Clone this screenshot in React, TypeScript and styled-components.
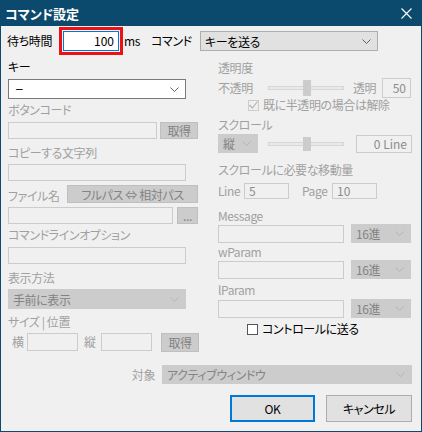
import * as React from 'react';
import styled, { createGlobalStyle } from 'styled-components';

const GlobalStyle = createGlobalStyle`
	html, body {
		margin: 0;
		padding: 0;
		background: #f0f0f0;
	}
	* {
		box-sizing: border-box;
	}
`;

const colors = {
	frame: '#0b4a6d',
	face: '#f0f0f0',
	text: '#000000',
	grayText: '#a0a0a0',
	disabledFill: '#cccccc',
	disabledBorder: '#bfbfbf',
	disabledInk: '#838383',
	buttonFace: '#e1e1e1',
	buttonBorder: '#adadad',
	accent: '#0078d7',
	highlight: '#ee1111'
};

const FONT = `"Noto Sans CJK JP", "Noto Sans", "Liberation Sans", sans-serif`;

const Window = styled.div`
	width: 422px;
	height: 432px;
	border: 1px solid ${colors.frame};
	border-top: none;
	background: ${colors.face};
	display: flex;
	flex-direction: column;
	font-family: ${FONT};
	font-size: 12px;
	letter-spacing: -0.4px;
	font-feature-settings: 'palt';
	color: ${colors.text};
`;

const TitleBar = styled.div`
	height: 26px;
	margin: 0 -1px;
	background: ${colors.frame};
	color: #ffffff;
	display: flex;
	align-items: center;
	justify-content: space-between;
	padding: 0 10px 0 5px;
	font-weight: bold;
	font-size: 13px;
	letter-spacing: 0;
	flex-shrink: 0;
`;

const Body = styled.div`
	display: flex;
	flex-direction: column;
	padding: 0 9px 0 7px;
`;

const TopRow = styled.div`
	margin-top: 1px;
	height: 28px;
	display: flex;
	align-items: center;
`;

const Text = styled.span<{ $w?: number; $dim?: boolean; $ml?: number }>`
	display: inline-block;
	flex-shrink: 0;
	width: ${p => (p.$w ? `${p.$w}px` : 'auto')};
	margin-left: ${p => p.$ml || 0}px;
	line-height: 14px;
	white-space: nowrap;
	color: ${p => (p.$dim ? colors.grayText : colors.text)};
`;

const Dash = styled.span`
	font-family: 'Liberation Sans', sans-serif;
	padding-left: 3px;
`;

const Label = styled.div<{ $mt: number; $dim?: boolean }>`
	margin-top: ${p => p.$mt}px;
	height: 14px;
	line-height: 14px;
	white-space: nowrap;
	color: ${p => (p.$dim ? colors.grayText : colors.text)};
`;

const Highlight = styled.div`
	width: 64px;
	height: 28px;
	border: 3px solid ${colors.highlight};
	padding: 1px;
	flex-shrink: 0;
`;

const FocusEdit = styled.div`
	height: 20px;
	border: 1px solid ${colors.accent};
	background: #ffffff;
	text-align: right;
	padding-right: 4px;
	line-height: 18px;
	letter-spacing: 0;
`;

const Edit = styled.div<{ $w: number; $h?: number; $ml?: number; $right?: boolean }>`
	width: ${p => p.$w}px;
	height: ${p => p.$h || 17}px;
	margin-left: ${p => p.$ml || 0}px;
	flex-shrink: 0;
	border: 1px solid ${colors.disabledFill};
	background: ${colors.face};
	color: #8c8c8c;
	line-height: ${p => (p.$h || 17) - 2}px;
	padding: 0 4px;
	text-align: ${p => (p.$right ? 'right' : 'left')};
	white-space: nowrap;
	letter-spacing: 0;
`;

const Combo = styled.div<{ $w: number; $h?: number; $ml?: number; $kind: 'edit' | 'button' | 'off' }>`
	width: ${p => p.$w}px;
	height: ${p => p.$h || 20}px;
	margin-left: ${p => p.$ml || 0}px;
	flex-shrink: 0;
	display: flex;
	align-items: center;
	justify-content: space-between;
	padding: 0 6px 0 4px;
	white-space: nowrap;
	border: 1px solid
		${p => (p.$kind === 'edit' ? '#7a7a7a' : p.$kind === 'button' ? colors.buttonBorder : colors.disabledFill)};
	background: ${p => (p.$kind === 'edit' ? '#ffffff' : p.$kind === 'button' ? colors.buttonFace : colors.disabledFill)};
	color: ${p => (p.$kind === 'off' ? colors.disabledInk : colors.text)};
`;

const PushButton = styled.div<{ $w: number; $h?: number; $ml?: number; $off?: boolean; $default?: boolean }>`
	width: ${p => p.$w}px;
	height: ${p => p.$h || 17}px;
	margin-left: ${p => p.$ml || 0}px;
	flex-shrink: 0;
	display: flex;
	align-items: center;
	justify-content: center;
	white-space: nowrap;
	background: ${p => (p.$off ? colors.disabledFill : colors.buttonFace)};
	border: ${p => (p.$default ? `2px solid ${colors.accent}` : `1px solid ${p.$off ? colors.disabledBorder : colors.buttonBorder}`)};
	color: ${p => (p.$off ? colors.disabledInk : colors.text)};
`;

const Columns = styled.div`
	display: grid;
	grid-template-columns: 191px 194px;
	column-gap: 19px;
	align-items: start;
`;

const Column = styled.div`
	display: flex;
	flex-direction: column;
`;

const Row = styled.div<{ $mt: number; $h: number; $pl?: number; $align?: string; $justify?: string }>`
	margin-top: ${p => p.$mt}px;
	height: ${p => p.$h}px;
	padding-left: ${p => p.$pl || 0}px;
	display: flex;
	align-items: ${p => p.$align || 'center'};
	justify-content: ${p => p.$justify || 'flex-start'};
`;

const Track = styled.div<{ $ml?: number }>`
	position: relative;
	width: 76px;
	height: 4px;
	margin-left: ${p => p.$ml || 0}px;
	flex-shrink: 0;
	background: #e7eaea;
	border: 1px solid #d6d6d6;
`;

const Thumb = styled.div<{ $h: number }>`
	position: absolute;
	left: 34px;
	top: 50%;
	width: 8px;
	height: ${p => p.$h}px;
	margin-top: ${p => -p.$h / 2}px;
	background: ${colors.disabledFill};
`;

const CheckBox = styled.div<{ $off?: boolean }>`
	width: 11px;
	height: 11px;
	flex-shrink: 0;
	border: 1px solid ${p => (p.$off ? colors.disabledFill : '#555555')};
	background: ${p => (p.$off ? colors.face : '#ffffff')};
	display: flex;
	align-items: center;
	justify-content: center;
	margin-right: 4px;
`;

const Chevron = ({ off }: { off?: boolean }) => (
	<svg width="9" height="5" viewBox="0 0 9 5">
		<polyline points="0.5,0.5 4.5,4.5 8.5,0.5" fill="none" stroke={off ? '#b4b4b4' : '#606060'} strokeWidth="1" />
	</svg>
);

const CloseGlyph = () => (
	<svg width="11" height="11" viewBox="0 0 11 11">
		<path d="M0.5 0.5 L10.5 10.5 M10.5 0.5 L0.5 10.5" stroke="#ffffff" strokeWidth="1.1" />
	</svg>
);

const Tick = () => (
	<svg width="9" height="8" viewBox="0 0 9 8">
		<polyline points="0.5,4 3.3,7 8.5,0.5" fill="none" stroke="#b4b4b4" strokeWidth="1.2" />
	</svg>
);

const Slider = ({ ml, thumb }: { ml?: number; thumb: number }) => (
	<Track $ml={ml}>
		<Thumb $h={thumb} />
	</Track>
);

const ParamRow = ({ mt }: { mt: number }) => (
	<Row $mt={mt} $h={19}>
		<Edit $w={126} $h={18} />
		<Combo $w={60} $h={19} $ml={7} $kind="off">
			16進
			<Chevron off />
		</Combo>
	</Row>
);

export default function App() {
	return (
		<>
			<GlobalStyle />
			<Window>
				<TitleBar>
					<span>コマンド設定</span>
					<CloseGlyph />
				</TitleBar>
				<Body>
					<TopRow>
						<Text $w={52} $ml={-1}>待ち時間</Text>
						<Highlight>
							<FocusEdit>100</FocusEdit>
						</Highlight>
						<Text $w={27} $ml={1}>ms</Text>
						<Text $w={49}>コマンド</Text>
						<Combo $w={178} $kind="button">
							キーを送る
							<Chevron />
						</Combo>
					</TopRow>
					<Columns>
						<Column>
							<Label $mt={5}>キー</Label>
							<Combo $w={178} $kind="edit" style={{ marginTop: 5 }}>
								<Dash>–</Dash>
								<Chevron />
							</Combo>
							<Label $mt={4} $dim>ボタンコード</Label>
							<Row $mt={5} $h={17}>
								<Edit $w={149} />
								<PushButton $w={38} $ml={3} $off>取得</PushButton>
							</Row>
							<Label $mt={7} $dim>コピーする文字列</Label>
							<Row $mt={4} $h={17}>
								<Edit $w={178} />
							</Row>
							<Row $mt={4} $h={18} $align="flex-end">
								<Text $w={59} $dim>ファイル名</Text>
								<PushButton $w={131} $h={18} $off>フルパス ⇔ 相対パス</PushButton>
							</Row>
							<Row $mt={4} $h={17}>
								<Edit $w={165} />
								<PushButton $w={21} $ml={4} $off>...</PushButton>
							</Row>
							<Label $mt={4} $dim>コマンドラインオプション</Label>
							<Row $mt={5} $h={17}>
								<Edit $w={178} />
							</Row>
							<Label $mt={7} $dim>表示方法</Label>
							<Row $mt={4} $h={20}>
								<Combo $w={178} $kind="off">
									手前に表示
									<Chevron off />
								</Combo>
							</Row>
							<Label $mt={6} $dim>サイズ | 位置</Label>
							<Row $mt={3} $h={20}>
								<Text $w={15} $ml={4} $dim>横</Text>
								<Edit $w={51} $h={18} />
								<Text $w={17} $ml={6} $dim>縦</Text>
								<Edit $w={51} $h={18} />
								<PushButton $w={38} $h={19} $ml={9} $off>取得</PushButton>
							</Row>
						</Column>
						<Column>
							<Label $mt={6} $dim>透明度</Label>
							<Row $mt={2} $h={22}>
								<Text $w={50} $dim>不透明</Text>
								<Slider thumb={16} />
								<Text $w={29} $ml={9} $dim>透明</Text>
								<Edit $w={29} $h={20} $right>50</Edit>
							</Row>
							<Row $mt={0} $h={12} $pl={30}>
								<CheckBox $off>
									<Tick />
								</CheckBox>
								<Text $dim>既に半透明の場合は解除</Text>
							</Row>
							<Label $mt={7} $dim>スクロール</Label>
							<Row $mt={2} $h={19}>
								<Combo $w={40} $h={19} $kind="off">
									縦
									<Chevron off />
								</Combo>
								<Slider ml={10} thumb={14} />
								<Edit $w={56} $h={18} $ml={12} $right>0 Line</Edit>
							</Row>
							<Label $mt={10} $dim>スクロールに必要な移動量</Label>
							<Row $mt={6} $h={16}>
								<Text $w={26} $dim>Line</Text>
								<Edit $w={45} $h={16}>5</Edit>
								<Text $w={30} $ml={13} $dim>Page</Text>
								<Edit $w={45} $h={16}>10</Edit>
							</Row>
							<Label $mt={10} $dim>Message</Label>
							<ParamRow mt={1} />
							<Label $mt={2} $dim>wParam</Label>
							<ParamRow mt={1} />
							<Label $mt={4} $dim>lParam</Label>
							<ParamRow mt={2} />
							<Row $mt={5} $h={12} $pl={29}>
								<CheckBox />
								<Text>コントロールに送る</Text>
							</Row>
						</Column>
					</Columns>
					<Row $mt={13} $h={19} $justify="flex-end">
						<Text $dim>対象</Text>
						<Combo $w={250} $h={19} $ml={7} $kind="off">
							アクティブウィンドウ
							<Chevron off />
						</Combo>
					</Row>
					<Row $mt={11} $h={27} $justify="flex-end">
						<PushButton $w={85} $h={27} $default>OK</PushButton>
						<PushButton $w={86} $h={27} $ml={11}>キャンセル</PushButton>
					</Row>
				</Body>
			</Window>
		</>
	);
}
